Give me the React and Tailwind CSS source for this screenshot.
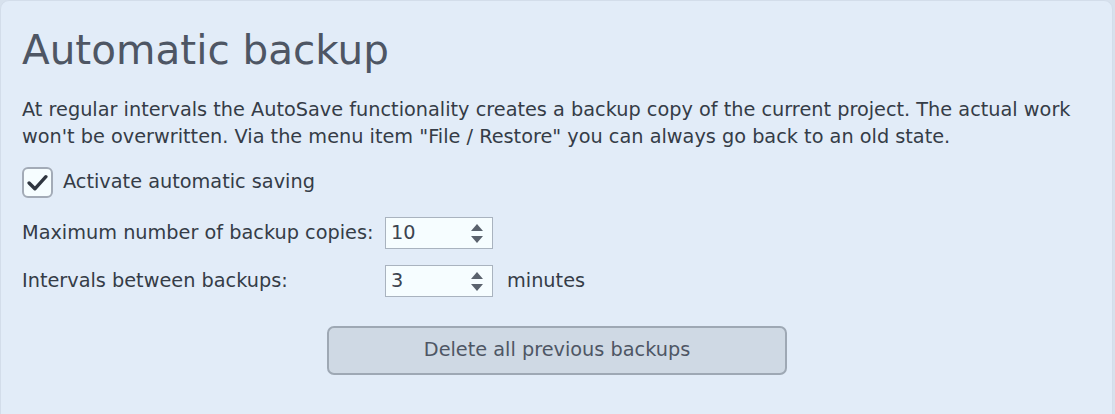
import { useState } from "react";

function Spin({ value }) {
  return (
    <div className="flex h-[32px] w-[108px] items-center justify-between border border-[#a9b3bf] bg-[#f6fdff] pl-[5px] pr-[9px]">
      <span className="text-[19.3px] text-[#3c4450]">{value}</span>
      <div className="flex flex-col items-center gap-[5px]">
        <svg width="12" height="7" viewBox="0 0 12 7">
          <path d="M6 0 L12 7 L0 7 Z" fill="#5a626d" />
        </svg>
        <svg width="12" height="7" viewBox="0 0 12 7">
          <path d="M0 0 L12 0 L6 7 Z" fill="#5a626d" />
        </svg>
      </div>
    </div>
  );
}

export default function App() {
  const [checked, setChecked] = useState(true);

  return (
    <div className="h-[414px] w-[1115px] bg-[#d7e1ed] pr-[2px] font-['DejaVu_Sans',sans-serif] text-[#353c47]">
      <div className="h-[416px] rounded-t-[9px] border border-[#d3ddea] bg-[#e2ecf8] px-[21px] pt-[22px]">
        <h1 className="text-[40.5px] leading-[54px] text-[#4e5664]">Automatic backup</h1>

        {/* Beschreibung */}
        <div className="mt-[19px] text-[19.3px] leading-[27px]">
          <p className="whitespace-nowrap">
            At regular intervals the AutoSave functionality creates a backup copy of the current project. The actual work
          </p>
          <p className="whitespace-nowrap">
            won't be overwritten. Via the menu item "File / Restore" you can always go back to an old state.
          </p>
        </div>

        <label className="mt-[17px] flex items-center gap-[10px] text-[19.3px]">
          <button
            onClick={() => setChecked(!checked)}
            className="flex h-[31px] w-[31px] items-center justify-center rounded-[6px] border-2 border-[#a3abb7] bg-[#f6fdff]"
          >
            {checked && (
              <svg width="21" height="17" viewBox="0 0 20 16">
                <path d="M2 8.5 L7.5 14 L18 2.5" fill="none" stroke="#2f3640" strokeWidth="3.2" strokeLinecap="round" strokeLinejoin="round" />
              </svg>
            )}
          </button>
          <span>Activate automatic saving</span>
        </label>

        <div className="mt-[19px] grid grid-cols-[363px_108px_auto] items-center justify-start gap-y-[16px] text-[19.3px]">
          <span>Maximum number of backup copies:</span>
          <Spin value="10" />
          <span />
          <span>Intervals between backups:</span>
          <Spin value="3" />
          <span className="ml-[14px]">minutes</span>
        </div>

        <div className="mt-[29px] flex pl-[305px]">
          <button className="h-[49px] w-[460px] rounded-[7px] border-2 border-[#9ea8b4] bg-[#cfd9e4] text-[19.3px] text-[#4e5664]">
            Delete all previous backups
          </button>
        </div>
      </div>
    </div>
  );
}
